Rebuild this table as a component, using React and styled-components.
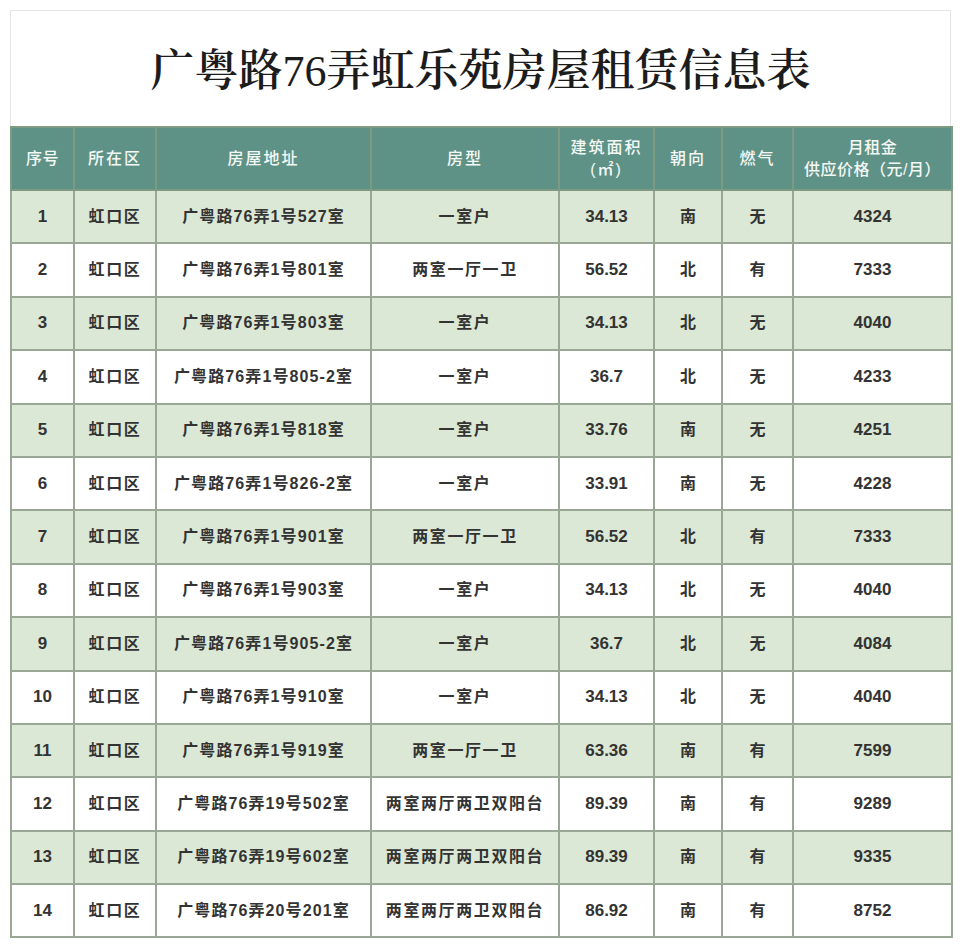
import React from "react";
import styled, { createGlobalStyle } from "styled-components";

const Global = createGlobalStyle`
  html, body { margin: 0; padding: 0; background: #ffffff; }
  body { font-family: "Liberation Sans", "Noto Sans CJK SC", sans-serif; }
`;

const Page = styled.div`
  width: 960px;
  height: 948px;
  padding: 10px 9px 0 10px;
  box-sizing: border-box;
  background: #fff;
`;

const Sheet = styled.div`
  width: 941px;
`;

const TitleBox = styled.div`
  height: 116px;
  box-sizing: border-box;
  border: 1px solid #e4e6e4;
  border-bottom: none;
  display: flex;
  align-items: center;
  justify-content: center;
  padding-bottom: 4px;
`;

const Title = styled.h1`
  margin: 0;
  font-family: "Liberation Serif", "Noto Serif CJK SC", "Noto Sans CJK SC", serif;
  font-size: 44px;
  font-weight: 600;
  letter-spacing: 0;
  color: #1c1c1c;
`;

const Digits = styled.span`
  font-weight: 400;
`;

const Table = styled.table`
  width: 941px;
  border-collapse: collapse;
  table-layout: fixed;
`;

const HeadCell = styled.th`
  height: 61px;
  padding: 0;
  background: #5f9286;
  color: #f4f8f5;
  font-family: "Liberation Sans", "Noto Sans CJK SC", sans-serif;
  font-size: 16px;
  font-weight: 500;
  line-height: 22px;
  letter-spacing: ${(p) => (p.$spaced ? "2px" : "0.5px")};
  border: 2px solid #7f9a82;
  text-align: center;
  vertical-align: middle;
`;

const Row = styled.tr`
  height: 53.4px;
  background: ${(p) => (p.$green ? "#dbe8d5" : "#ffffff")};
`;

const Cell = styled.td`
  padding: 0;
  font-family: "Liberation Sans", "Noto Sans CJK SC", sans-serif;
  font-size: ${(p) => (p.$num ? "17px" : "16px")};
  line-height: 20px;
  font-weight: 700;
  color: #333333;
  letter-spacing: ${(p) => p.$ls || "0"};
  border: 2px solid #98a895;
  text-align: center;
  vertical-align: middle;
  white-space: nowrap;
`;

const cols = [63, 82, 215, 188, 95, 68, 71, 159];

const rows = [
  ["1", "广粤路76弄1号527室", "一室户", "34.13", "南", "无", "4324"],
  ["2", "广粤路76弄1号801室", "两室一厅一卫", "56.52", "北", "有", "7333"],
  ["3", "广粤路76弄1号803室", "一室户", "34.13", "北", "无", "4040"],
  ["4", "广粤路76弄1号805-2室", "一室户", "36.7", "北", "无", "4233"],
  ["5", "广粤路76弄1号818室", "一室户", "33.76", "南", "无", "4251"],
  ["6", "广粤路76弄1号826-2室", "一室户", "33.91", "南", "无", "4228"],
  ["7", "广粤路76弄1号901室", "两室一厅一卫", "56.52", "北", "有", "7333"],
  ["8", "广粤路76弄1号903室", "一室户", "34.13", "北", "无", "4040"],
  ["9", "广粤路76弄1号905-2室", "一室户", "36.7", "北", "无", "4084"],
  ["10", "广粤路76弄1号910室", "一室户", "34.13", "北", "无", "4040"],
  ["11", "广粤路76弄1号919室", "两室一厅一卫", "63.36", "南", "有", "7599"],
  ["12", "广粤路76弄19号502室", "两室两厅两卫双阳台", "89.39", "南", "有", "9289"],
  ["13", "广粤路76弄19号602室", "两室两厅两卫双阳台", "89.39", "南", "有", "9335"],
  ["14", "广粤路76弄20号201室", "两室两厅两卫双阳台", "86.92", "南", "有", "8752"],
];

export default function App() {
  return (
    <Page>
      <Global />
      <Sheet>
        <TitleBox>
          <Title>
            广粤路<Digits>76</Digits>弄虹乐苑房屋租赁信息表
          </Title>
        </TitleBox>
        <Table>
          <colgroup>
            {cols.map((w, i) => (
              <col key={i} style={{ width: w }} />
            ))}
          </colgroup>
          <thead>
            <tr>
              <HeadCell>序号</HeadCell>
              <HeadCell $spaced>所在区</HeadCell>
              <HeadCell $spaced>房屋地址</HeadCell>
              <HeadCell $spaced>房型</HeadCell>
              <HeadCell $spaced>
                建筑面积
                <br />
                (㎡)
              </HeadCell>
              <HeadCell $spaced>朝向</HeadCell>
              <HeadCell $spaced>燃气</HeadCell>
              <HeadCell>
                月租金
                <br />
                供应价格（元/月）
              </HeadCell>
            </tr>
          </thead>
          <tbody>
            {rows.map((r, i) => (
              <Row key={r[0]} $green={i % 2 === 0}>
                <Cell $num>{r[0]}</Cell>
                <Cell $ls="1.6px">虹口区</Cell>
                <Cell $ls="1.1px">{r[1]}</Cell>
                <Cell $ls="1.6px">{r[2]}</Cell>
                <Cell $num>{r[3]}</Cell>
                <Cell>{r[4]}</Cell>
                <Cell>{r[5]}</Cell>
                <Cell $num>{r[6]}</Cell>
              </Row>
            ))}
          </tbody>
        </Table>
      </Sheet>
    </Page>
  );
}
